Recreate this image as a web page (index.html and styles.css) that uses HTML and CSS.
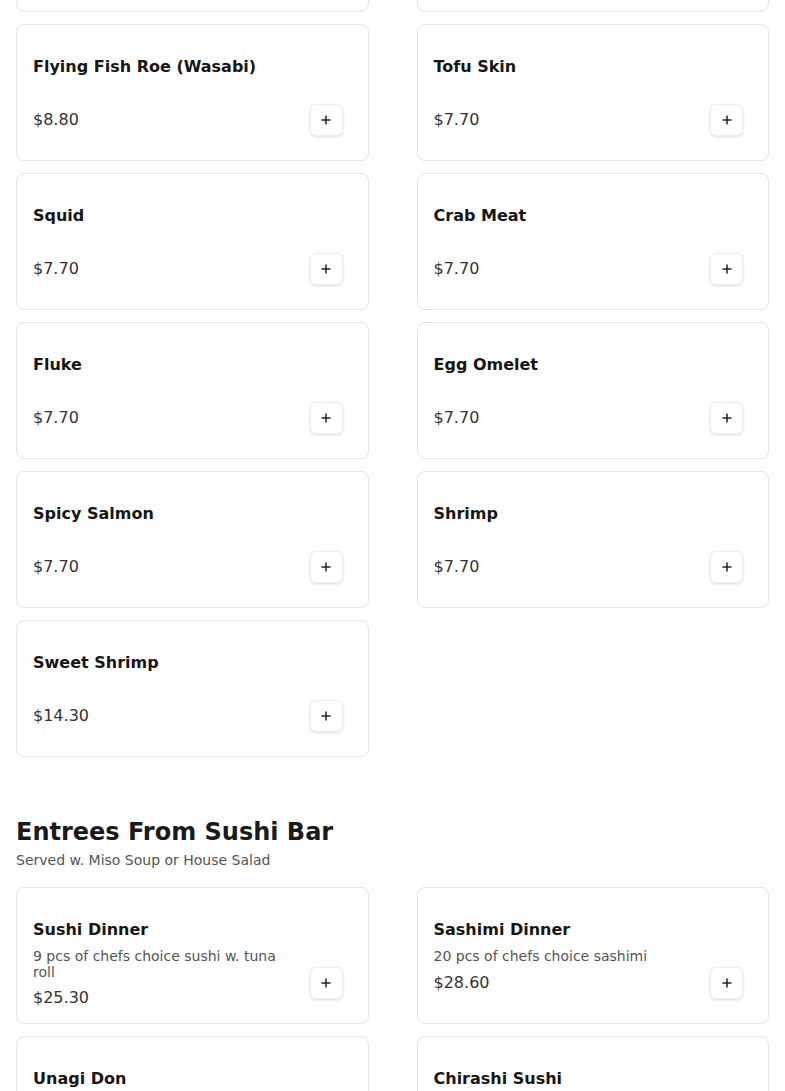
FILE: index.html
```html
<!DOCTYPE html>
<html lang="en">
<head>
<meta charset="utf-8">
<title>Menu</title>
<link rel="stylesheet" href="styles.css">
</head>
<body>
<main class="page">
  <section class="section section-first">
    <div class="grid">
      <div class="card"><div class="info"><div class="title">Salmon Roe</div><div class="price">$8.80</div></div><button class="add" aria-label="Add"><svg viewBox="0 0 10 10" width="10" height="10"><path d="M5 0.5V9.5M0.5 5H9.5"/></svg></button></div>
      <div class="card"><div class="info"><div class="title">Sea Urchin</div><div class="price">$9.90</div></div><button class="add" aria-label="Add"><svg viewBox="0 0 10 10" width="10" height="10"><path d="M5 0.5V9.5M0.5 5H9.5"/></svg></button></div>

      <div class="card"><div class="info"><div class="title">Flying Fish Roe (Wasabi)</div><div class="price">$8.80</div></div><button class="add" aria-label="Add"><svg viewBox="0 0 10 10" width="10" height="10"><path d="M5 0.5V9.5M0.5 5H9.5"/></svg></button></div>
      <div class="card"><div class="info"><div class="title">Tofu Skin</div><div class="price">$7.70</div></div><button class="add" aria-label="Add"><svg viewBox="0 0 10 10" width="10" height="10"><path d="M5 0.5V9.5M0.5 5H9.5"/></svg></button></div>

      <div class="card"><div class="info"><div class="title">Squid</div><div class="price">$7.70</div></div><button class="add" aria-label="Add"><svg viewBox="0 0 10 10" width="10" height="10"><path d="M5 0.5V9.5M0.5 5H9.5"/></svg></button></div>
      <div class="card"><div class="info"><div class="title">Crab Meat</div><div class="price">$7.70</div></div><button class="add" aria-label="Add"><svg viewBox="0 0 10 10" width="10" height="10"><path d="M5 0.5V9.5M0.5 5H9.5"/></svg></button></div>

      <div class="card"><div class="info"><div class="title">Fluke</div><div class="price">$7.70</div></div><button class="add" aria-label="Add"><svg viewBox="0 0 10 10" width="10" height="10"><path d="M5 0.5V9.5M0.5 5H9.5"/></svg></button></div>
      <div class="card"><div class="info"><div class="title">Egg Omelet</div><div class="price">$7.70</div></div><button class="add" aria-label="Add"><svg viewBox="0 0 10 10" width="10" height="10"><path d="M5 0.5V9.5M0.5 5H9.5"/></svg></button></div>

      <div class="card"><div class="info"><div class="title">Spicy Salmon</div><div class="price">$7.70</div></div><button class="add" aria-label="Add"><svg viewBox="0 0 10 10" width="10" height="10"><path d="M5 0.5V9.5M0.5 5H9.5"/></svg></button></div>
      <div class="card"><div class="info"><div class="title">Shrimp</div><div class="price">$7.70</div></div><button class="add" aria-label="Add"><svg viewBox="0 0 10 10" width="10" height="10"><path d="M5 0.5V9.5M0.5 5H9.5"/></svg></button></div>

      <div class="card"><div class="info"><div class="title">Sweet Shrimp</div><div class="price">$14.30</div></div><button class="add" aria-label="Add"><svg viewBox="0 0 10 10" width="10" height="10"><path d="M5 0.5V9.5M0.5 5H9.5"/></svg></button></div>
    </div>
  </section>

  <section class="section">
    <h2 class="section-title">Entrees From Sushi Bar</h2>
    <p class="section-sub">Served w. Miso Soup or House Salad</p>
    <div class="grid">
      <div class="card"><div class="info"><div class="title">Sushi Dinner</div><div class="desc">9 pcs of chefs choice sushi w. tuna roll</div><div class="price">$25.30</div></div><button class="add" aria-label="Add"><svg viewBox="0 0 10 10" width="10" height="10"><path d="M5 0.5V9.5M0.5 5H9.5"/></svg></button></div>
      <div class="card"><div class="info"><div class="title">Sashimi Dinner</div><div class="desc">20 pcs of chefs choice sashimi</div><div class="price">$28.60</div></div><button class="add" aria-label="Add"><svg viewBox="0 0 10 10" width="10" height="10"><path d="M5 0.5V9.5M0.5 5H9.5"/></svg></button></div>

      <div class="card"><div class="info"><div class="title">Unagi Don</div><div class="desc">Broiled eel over sushi rice</div><div class="price">$24.20</div></div><button class="add" aria-label="Add"><svg viewBox="0 0 10 10" width="10" height="10"><path d="M5 0.5V9.5M0.5 5H9.5"/></svg></button></div>
      <div class="card"><div class="info"><div class="title">Chirashi Sushi</div><div class="desc">Assorted sashimi over sushi rice</div><div class="price">$26.40</div></div><button class="add" aria-label="Add"><svg viewBox="0 0 10 10" width="10" height="10"><path d="M5 0.5V9.5M0.5 5H9.5"/></svg></button></div>
    </div>
  </section>
</main>
</body>
</html>
```

FILE: styles.css
```css
* { box-sizing: border-box; }

html, body {
  margin: 0;
  padding: 0;
  background: #ffffff;
}

body {
  font-family: "DejaVu Sans", Verdana, sans-serif;
  color: #1a1a1a;
  overflow: hidden;
}

.page {
  padding: 0 16px;
}

.section-first {
  margin-top: -125px;
}

.section + .section {
  margin-top: 59px;
}

.section-title {
  margin: 0;
  font-size: 24px;
  line-height: 32px;
  font-weight: 700;
  color: #1a1a1a;
}

.section-sub {
  margin: 2px 0 0;
  font-size: 14px;
  line-height: 20px;
  color: #555555;
}

.section-sub + .grid {
  margin-top: 17px;
}

.grid {
  display: grid;
  grid-template-columns: 1fr 1fr;
  column-gap: 48px;
  row-gap: 12px;
}

.card {
  display: flex;
  align-items: flex-start;
  gap: 16px;
  min-height: 137px;
  padding: 30px 26px 13px 16px;
  border: 1px solid #e5e5e5;
  border-radius: 8px;
  background: #ffffff;
}

.info {
  flex: 1;
  min-width: 0;
  min-height: 77px;
  display: flex;
  flex-direction: column;
}

.title {
  font-size: 16px;
  line-height: 24px;
  font-weight: 700;
  color: #161616;
}

.desc {
  margin-top: 6px;
  font-size: 14px;
  line-height: 16px;
  color: #555555;
}

.price {
  margin-top: auto;
  padding-top: 6px;
  font-size: 16px;
  line-height: 24px;
  color: #333333;
}

.add {
  flex: none;
  align-self: flex-end;
  width: 33px;
  height: 32px;
  margin-bottom: 11px;
  margin-right: -1px;
  padding: 0;
  display: flex;
  align-items: center;
  justify-content: center;
  border: 1px solid #eeeeee;
  border-radius: 6px;
  background: #ffffff;
  box-shadow: 0 1px 3px rgba(0, 0, 0, 0.14);
  cursor: pointer;
}

.add svg {
  display: block;
}

.add path {
  fill: none;
  stroke: #222222;
  stroke-width: 1.5;
}
```
